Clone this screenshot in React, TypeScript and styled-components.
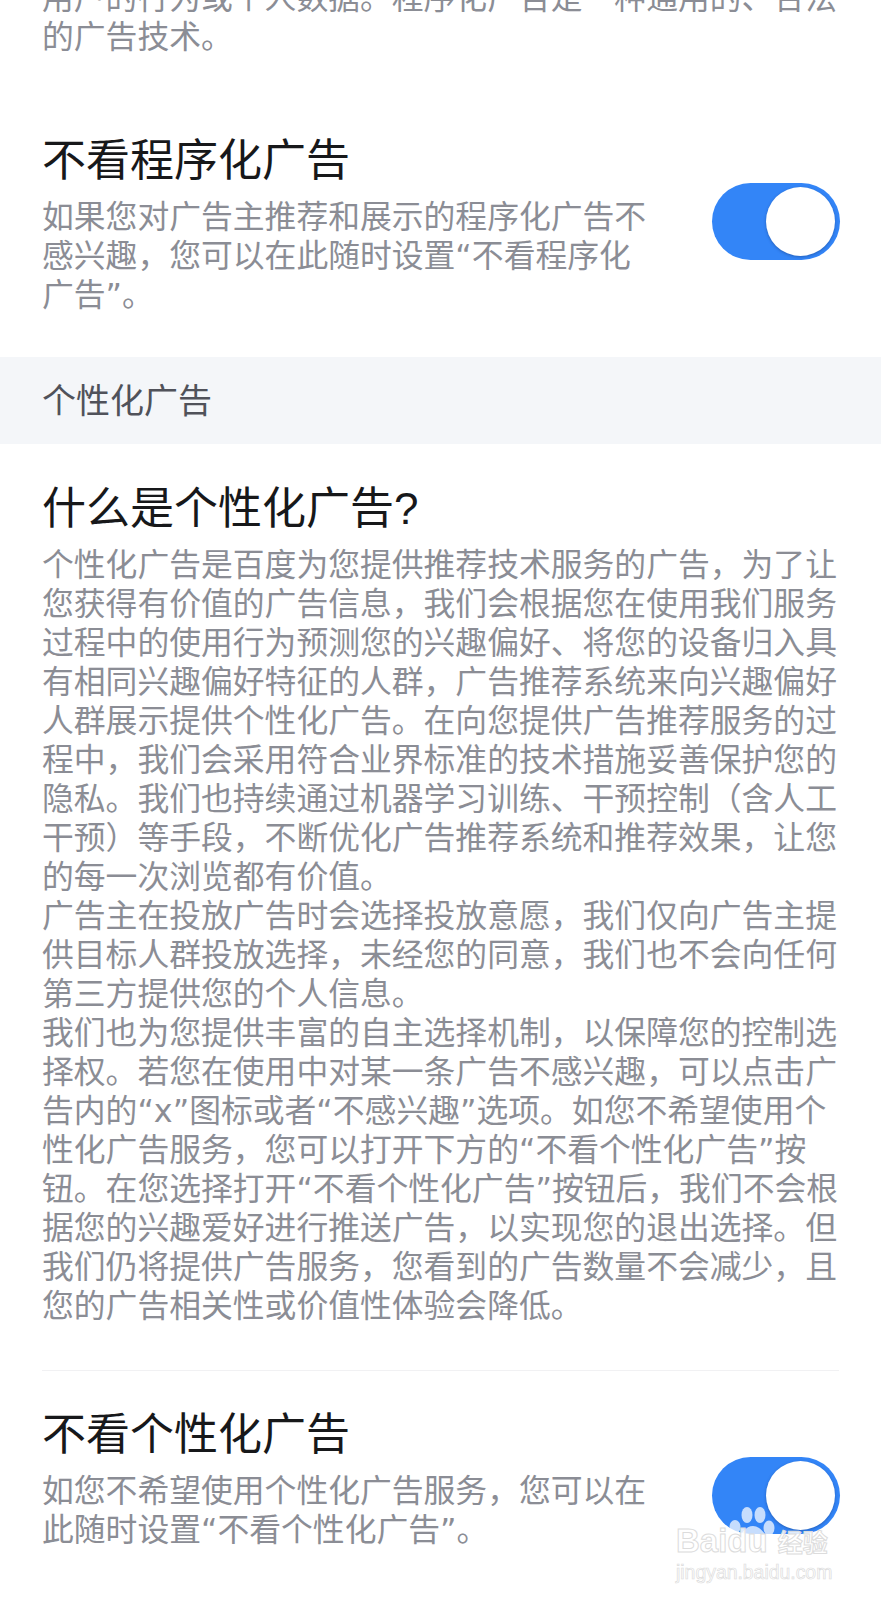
import React from "react";
import styled, { createGlobalStyle } from "styled-components";

const GlobalStyle = createGlobalStyle`
    html, body {
        margin: 0;
        padding: 0;
        background: #ffffff;
    }
`;

const Page = styled.div`
    position: relative;
    width: 881px;
    height: 1600px;
    overflow: hidden;
    background: #ffffff;
    font-family: "Liberation Sans", "Noto Sans CJK SC", sans-serif;
`;

const Scroller = styled.div`
    margin-top: -22px;
`;

const Intro = styled.p`
    margin: 0 0 73px;
    padding: 0 42px;
`;

const Body = styled.span`
    display: block;
    font-family: "DejaVu Sans", "Noto Sans CJK SC", sans-serif;
    font-size: 31.8px;
    line-height: 39px;
    color: #8b8d95;
`;

const SettingRow = styled.div`
    display: flex;
    justify-content: space-between;
    align-items: flex-start;
    padding: 0 41px 0 42px;
`;

const SettingText = styled.div`
    width: 610px;
`;

const Title = styled.h2`
    margin: 2px 0 6px;
    font-size: 44px;
    line-height: 60px;
    font-weight: 400;
    color: #17181a;
`;

const Toggle = styled.div`
    position: relative;
    flex: none;
    width: 128px;
    height: 77px;
    margin-top: 54px;
    border-radius: 39px;
    background: #3385f7;
`;

const Knob = styled.div`
    position: absolute;
    top: 4px;
    right: 5px;
    width: 69px;
    height: 69px;
    border-radius: 50%;
    background: #ffffff;
    box-shadow: 0 1px 3px rgba(20, 50, 110, 0.45);
`;

const SectionHeader = styled.div`
    margin-top: 43px;
    height: 87px;
    padding: 0 42px 5px;
    box-sizing: border-box;
    display: flex;
    align-items: center;
    background: #f4f6f9;
    font-size: 34px;
    color: #50525a;
`;

const Article = styled.section`
    padding: 33px 42px 0;
`;

const Divider = styled.hr`
    margin: 45px 0 0;
    border: none;
    height: 1px;
    background: #f1f1f3;
`;

const LastRow = styled(SettingRow)`
    margin-top: 32px;
`;

const Watermark = styled.div`
    position: absolute;
    left: 674px;
    top: 1504px;
    width: 170px;
    height: 80px;
    pointer-events: none;
`;

const Paw = styled.svg`
    position: absolute;
    left: 55px;
    top: 0;
    width: 60px;
    height: 48px;
`;

const Brand = styled.div`
    position: absolute;
    left: 2px;
    top: 19px;
    font-size: 33px;
    line-height: 36px;
    font-weight: 700;
    white-space: nowrap;
    color: rgba(255, 255, 255, 0.85);
    -webkit-text-stroke: 1px #dcdcdc;
`;

const BrandCn = styled.span`
    font-size: 25px;
    margin-left: 10px;
`;

const Domain = styled.div`
    position: absolute;
    left: 2px;
    top: 57px;
    font-size: 19.4px;
    line-height: 22px;
    white-space: nowrap;
    color: rgba(255, 255, 255, 0.85);
    -webkit-text-stroke: 0.7px #dcdcdc;
`;

export default function App() {
    return (
        <Page>
            <GlobalStyle />
            <Scroller>
                <Intro>
                    <Body>用户的行为或个人数据。程序化广告是一种通用的、合法的广告技术。</Body>
                </Intro>
                <SettingRow>
                    <SettingText>
                        <Title>不看程序化广告</Title>
                        <Body>如果您对广告主推荐和展示的程序化广告不感兴趣，您可以在此随时设置“不看程序化广告”。</Body>
                    </SettingText>
                    <Toggle><Knob /></Toggle>
                </SettingRow>
                <SectionHeader>个性化广告</SectionHeader>
                <Article>
                    <Title>什么是个性化广告?</Title>
                    <Body>个性化广告是百度为您提供推荐技术服务的广告，为了让您获得有价值的广告信息，我们会根据您在使用我们服务过程中的使用行为预测您的兴趣偏好、将您的设备归入具有相同兴趣偏好特征的人群，广告推荐系统来向兴趣偏好人群展示提供个性化广告。在向您提供广告推荐服务的过程中，我们会采用符合业界标准的技术措施妥善保护您的隐私。我们也持续通过机器学习训练、干预控制（含人工干预）等手段，不断优化广告推荐系统和推荐效果，让您的每一次浏览都有价值。</Body>
                    <Body>广告主在投放广告时会选择投放意愿，我们仅向广告主提供目标人群投放选择，未经您的同意，我们也不会向任何第三方提供您的个人信息。</Body>
                    <Body>我们也为您提供丰富的自主选择机制，以保障您的控制选择权。若您在使用中对某一条广告不感兴趣，可以点击广告内的“x”图标或者“不感兴趣”选项。如您不希望使用个性化广告服务，您可以打开下方的“不看个性化广告”按钮。在您选择打开“不看个性化广告”按钮后，我们不会根据您的兴趣爱好进行推送广告，以实现您的退出选择。但我们仍将提供广告服务，您看到的广告数量不会减少，且您的广告相关性或价值性体验会降低。</Body>
                    <Divider />
                </Article>
                <LastRow>
                    <SettingText>
                        <Title>不看个性化广告</Title>
                        <Body>如您不希望使用个性化广告服务，您可以在此随时设置“不看个性化广告”。</Body>
                    </SettingText>
                    <Toggle><Knob /></Toggle>
                </LastRow>
            </Scroller>
            <Watermark>
                <Paw viewBox="0 0 60 48">
                    <g fill="#ffffff" fillOpacity="0.72">
                        <ellipse cx="6" cy="23" rx="5.5" ry="7" />
                        <ellipse cx="18" cy="11" rx="5.5" ry="8" />
                        <ellipse cx="31" cy="11" rx="5.5" ry="8" />
                        <ellipse cx="40" cy="24" rx="5.5" ry="7.5" />
                        <path d="M24 22c7 0 13 8 15 15 1 5-3 8-8 7-5-1-9-1-14 0-5 1-9-2-8-7 2-7 8-15 15-15z" />
                    </g>
                </Paw>
                <Brand>Baidu<BrandCn>经验</BrandCn></Brand>
                <Domain>jingyan.baidu.com</Domain>
            </Watermark>
        </Page>
    );
}
